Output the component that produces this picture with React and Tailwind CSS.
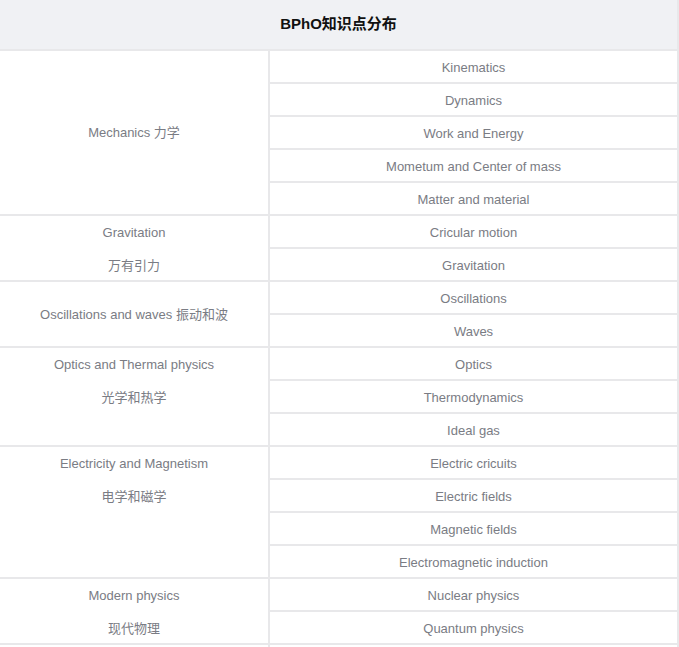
import React from "react";

const groups = [
  { label: ["Mechanics 力学"], center: true, items: ["Kinematics", "Dynamics", "Work and Energy", "Mometum and Center of mass", "Matter and material"] },
  { label: ["Gravitation", "万有引力"], items: ["Cricular motion", "Gravitation"] },
  { label: ["Oscillations and waves 振动和波"], center: true, items: ["Oscillations", "Waves"] },
  { label: ["Optics and Thermal physics", "光学和热学"], items: ["Optics", "Thermodynamics", "Ideal gas"] },
  { label: ["Electricity and Magnetism", "电学和磁学"], items: ["Electric cricuits", "Electric fields", "Magnetic fields", "Electromagnetic induction"] },
  { label: ["Modern physics", "现代物理"], items: ["Nuclear physics", "Quantum physics"] },
];

const App = () => {
  return (
    <div
      className="w-[679px] h-[647px] overflow-hidden bg-white text-[13px] text-[#7a7c84]"
      style={{ fontFamily: '"Liberation Sans", Arial, "Noto Sans CJK SC", sans-serif' }}
    >
      <div className="border-r-2 border-[#e8e8ea]">
        <div className="h-[51px] flex items-center justify-center bg-[#f0f1f4] border-b-2 border-[#e8e8ea] font-bold text-[15px] text-[#111]">
          BPhO知识点分布
        </div>

        {groups.map((g, i) => (
          <div key={i} className="flex border-b-2 border-[#e8e8ea]">
            <div
              className={
                "w-[270px] shrink-0 border-r-2 border-[#e8e8ea] flex flex-col items-center " +
                (g.center ? "justify-center" : "justify-start")
              }
            >
              {g.label.map((t, j) => (
                <div
                  key={j}
                  className={
                    "leading-[33px] text-center " +
                    (j === g.label.length - 1 && !g.center ? "h-[31px]" : "h-[33px]")
                  }
                >
                  {t}
                </div>
              ))}
            </div>
            <div className="flex-1 flex flex-col">
              {g.items.map((t, j) => (
                <div
                  key={j}
                  className={
                    "flex items-center justify-center pt-[3px] " +
                    (j < g.items.length - 1 ? "h-[33px] border-b-2 border-[#e8e8ea]" : "h-[31px]")
                  }
                >
                  {t}
                </div>
              ))}
            </div>
          </div>
        ))}

        <div className="flex h-[31px]">
          <div className="w-[270px] shrink-0 border-r-2 border-[#e8e8ea]" />
          <div className="flex-1" />
        </div>
      </div>
    </div>
  );
};

export default App;
